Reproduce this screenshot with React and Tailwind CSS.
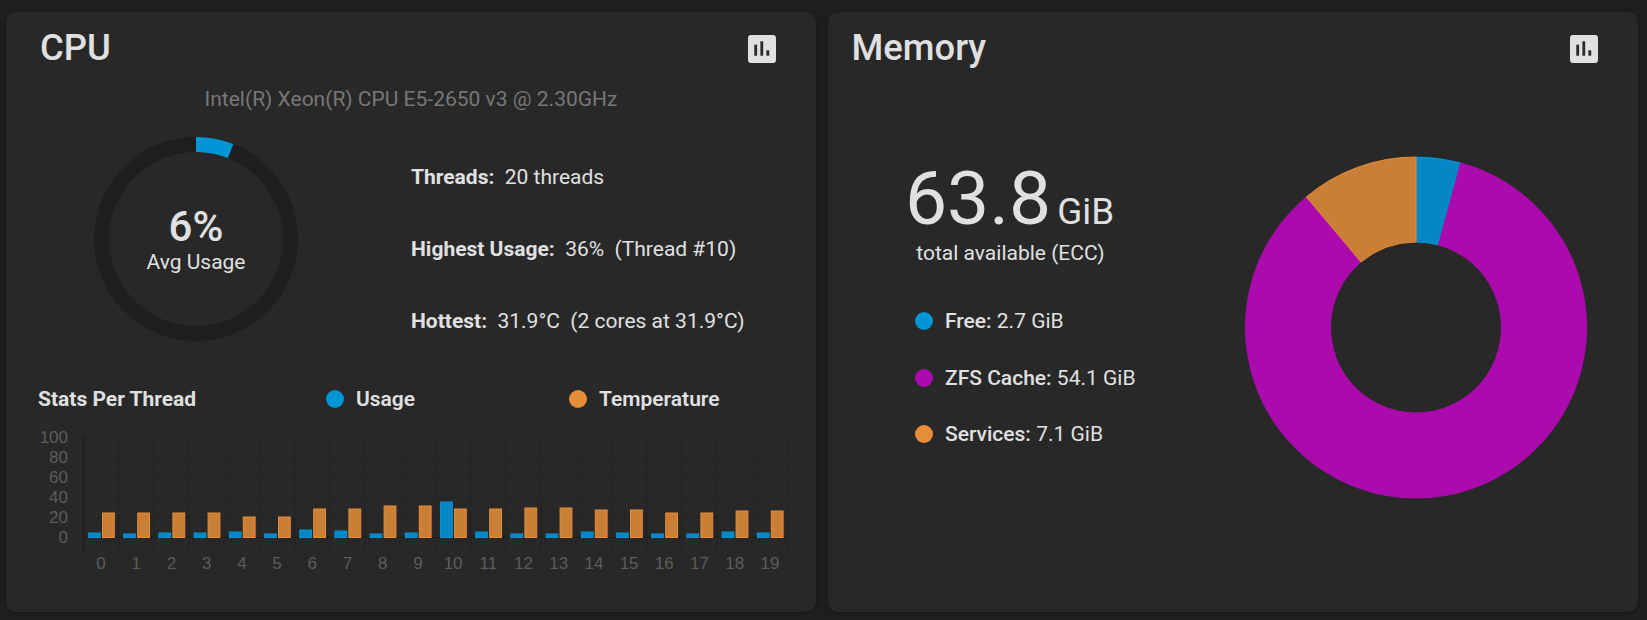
const usage = [5, 4, 5, 5, 6, 4, 8, 7, 4, 5, 36, 6, 4, 4, 6, 5, 4, 4, 6, 5];
const temp = [25, 25, 25, 25, 21, 21, 29, 29, 32, 32, 29, 29, 30, 30, 28, 28, 25, 25, 27, 27];

function PollIcon() {
  return (
    <svg width="28" height="28" viewBox="0 0 28 28" className="block">
      <rect x="0" y="0" width="28" height="28" rx="3" fill="#e0e0e0" />
      <rect x="6.3" y="9.7" width="2.8" height="11" fill="#282828" />
      <rect x="12.4" y="6.3" width="2.8" height="14.4" fill="#282828" />
      <rect x="18.4" y="15.3" width="2.8" height="5.4" fill="#282828" />
    </svg>
  );
}

function Header({ title, pad }) {
  return (
    <div className={`flex items-center justify-between h-[68px] ${pad} pr-[40px] pt-[5px]`}>
      <h2 className="text-[36.4px] leading-none font-medium text-[#e0e0e0] mt-[1px] mb-[1px]">{title}</h2>
      <PollIcon />
    </div>
  );
}

function Gauge() {
  const c = 110;
  const r = 94.5;
  const a = (21.5 * Math.PI) / 180;
  const x = c + r * Math.sin(a);
  const y = c - r * Math.cos(a);
  return (
    <div className="relative w-[220px] h-[220px]">
      <svg width="220" height="220" viewBox="0 0 220 220" className="block">
        <circle cx={c} cy={c} r={r} fill="none" stroke="#1e1e1e" strokeWidth="15" />
        <path d={`M ${c} ${c - r} A ${r} ${r} 0 0 1 ${x} ${y}`} fill="none" stroke="#0095d5" strokeWidth="15" />
      </svg>
      <div className="absolute inset-0 flex flex-col items-center justify-center text-[#e0e0e0]">
        <span className="text-[42px] leading-[46px] font-medium">6%</span>
        <span className="text-[21px] leading-[24px]">Avg Usage</span>
      </div>
    </div>
  );
}

function BarChart() {
  const left = 77.5;
  const top = 13.5;
  const zero = top + 100;
  const step = 35.2;
  const right = left + step * 20;
  const bottom = zero + 14.5;
  const cats = usage.map((_, i) => i);
  return (
    <svg width="810" height="160" viewBox="0 0 810 160" className="block mt-[13px]" style={{ fontFamily: '"Liberation Sans", Arial, sans-serif' }}>
      {[0, 1, 2, 3, 4, 5].map((i) => {
        const y = top + i * 20;
        return (
          <g key={i}>
            <line x1={left} x2={right} y1={y} y2={y} stroke={i === 5 ? "#1a1a1a" : "#232323"} strokeWidth="1" />
            <text x="62" y={y + 5} textAnchor="end" fontSize="17" fill="#5c5c5c">{100 - i * 20}</text>
          </g>
        );
      })}
      {[...cats, 20].map((i) => (
        <line key={i} x1={left + i * step} x2={left + i * step} y1={top} y2={bottom} stroke={i === 0 ? "#1a1a1a" : "#232323"} strokeWidth="1" />
      ))}
      {cats.map((i) => {
        const x = left + i * step;
        return (
          <g key={i}>
            <rect x={x + 5} y={zero - usage[i] + 0.5} width="11.8" height={usage[i] - 0.5} fill="#0487c2" stroke="#0095d5" strokeWidth="1" />
            <rect x={x + 19} y={zero - temp[i] + 0.5} width="11.8" height={temp[i] - 0.5} fill="#c97f35" stroke="#e68d37" strokeWidth="1" />
            <text x={x + step / 2} y={bottom + 17} textAnchor="middle" fontSize="17" fill="#5c5c5c">{i}</text>
          </g>
        );
      })}
    </svg>
  );
}

function Stat({ label, value }) {
  return (
    <div className="text-[21px] leading-[24px] text-[#e0e0e0] whitespace-pre">
      <span className="font-bold">{label}</span>
      {value}
    </div>
  );
}

function Dot({ color }) {
  return <span className={`block w-[18px] h-[18px] rounded-full ${color}`} />;
}

function CpuCard() {
  return (
    <section className="flex flex-col rounded-[10px] bg-[#282828] shadow-[0_1px_3px_rgba(0,0,0,0.3)] overflow-hidden">
      <Header title="CPU" pad="pl-[34px]" />
      <div className="text-center text-[21px] leading-[24px] text-[#777777] pt-[7px]">
        Intel(R) Xeon(R) CPU E5-2650 v3 @ 2.30GHz
      </div>
      <div className="flex mt-[18px] h-[220px]">
        <div className="ml-[80px] w-[325px]">
          <Gauge />
        </div>
        <div className="flex flex-col gap-[48px] pt-[36px]">
          <Stat label="Threads:" value="  20 threads" />
          <Stat label="Highest Usage:" value="  36%  (Thread #10)" />
          <Stat label="Hottest:" value="  31.9°C  (2 cores at 31.9°C)" />
        </div>
      </div>
      <div className="flex items-center h-[24px] mt-[38px] pl-[32px] text-[21px] leading-[24px] text-[#e0e0e0] font-bold">
        <span className="w-[288px]">Stats Per Thread</span>
        <span className="flex items-center gap-[12px] w-[243px]">
          <Dot color="bg-[#0095d5]" />
          <span className="font-semibold">Usage</span>
        </span>
        <span className="flex items-center gap-[12px]">
          <Dot color="bg-[#e68d37]" />
          <span className="font-semibold">Temperature</span>
        </span>
      </div>
      <BarChart />
    </section>
  );
}

function Donut() {
  const cx = 171;
  const cy = 171.5;
  const R = 170.5;
  const r = 85.5;
  const total = 63.9;
  const seg = (from, to) => {
    const p = (rad, deg) => {
      const a = (deg * Math.PI) / 180;
      return `${cx + rad * Math.sin(a)} ${cy - rad * Math.cos(a)}`;
    };
    const large = to - from > 180 ? 1 : 0;
    return `M ${p(R, from)} A ${R} ${R} 0 ${large} 1 ${p(R, to)} L ${p(r, to)} A ${r} ${r} 0 ${large} 0 ${p(r, from)} Z`;
  };
  const free = (2.7 / total) * 360;
  const zfs = free + (54.1 / total) * 360;
  return (
    <svg width="343" height="343" viewBox="0 0 343 343" className="block">
      <path d={seg(0, free)} fill="#0487c2" stroke="#0095d5" strokeWidth="1" />
      <path d={seg(free, zfs)} fill="#ab0bad" stroke="#ab0bad" strokeWidth="1" />
      <path d={seg(zfs, 360)} fill="#c97f35" stroke="#e68d37" strokeWidth="1" />
    </svg>
  );
}

function Legend({ color, label, value }) {
  return (
    <div className="flex items-center gap-[12px] h-[24px] text-[21px] leading-[24px] text-[#e0e0e0]">
      <Dot color={color} />
      <span>
        <span className="font-medium">{label}</span> {value}
      </span>
    </div>
  );
}

function MemoryCard() {
  return (
    <section className="flex flex-col rounded-[10px] bg-[#282828] shadow-[0_1px_3px_rgba(0,0,0,0.3)] overflow-hidden">
      <Header title="Memory" pad="pl-[23.5px]" />
      <div className="flex mt-[76px]">
        <div className="w-[417px] pl-[80px] flex flex-col">
          <div className="flex flex-col items-center w-[205px] text-[#e0e0e0]">
            <div className="flex items-baseline whitespace-nowrap h-[84px] mr-[2px]">
              <span className="text-[75px] leading-[84px] font-normal">63.8</span>
              <span className="text-[36.75px] leading-[42px] ml-[6px]">GiB</span>
            </div>
            <div className="text-[21px] leading-[24px] mt-[1px] whitespace-nowrap">total available (ECC)</div>
          </div>
          <div className="flex flex-col gap-[32.5px] mt-[44px] ml-[7px]">
            <Legend color="bg-[#0095d5]" label="Free:" value="2.7 GiB" />
            <Legend color="bg-[#ab0bad]" label="ZFS Cache:" value="54.1 GiB" />
            <Legend color="bg-[#e68d37]" label="Services:" value="7.1 GiB" />
          </div>
        </div>
        <Donut />
      </div>
    </section>
  );
}

export default function App() {
  return (
    <div className="h-[620px] bg-[#1e1e1e] pt-[12px] pb-[8px] pl-[6px] pr-[9px] overflow-hidden" style={{ fontFamily: 'Roboto, "Liberation Sans", sans-serif' }}>
      <div className="grid grid-cols-2 gap-[12px] h-full">
        <CpuCard />
        <MemoryCard />
      </div>
    </div>
  );
}
